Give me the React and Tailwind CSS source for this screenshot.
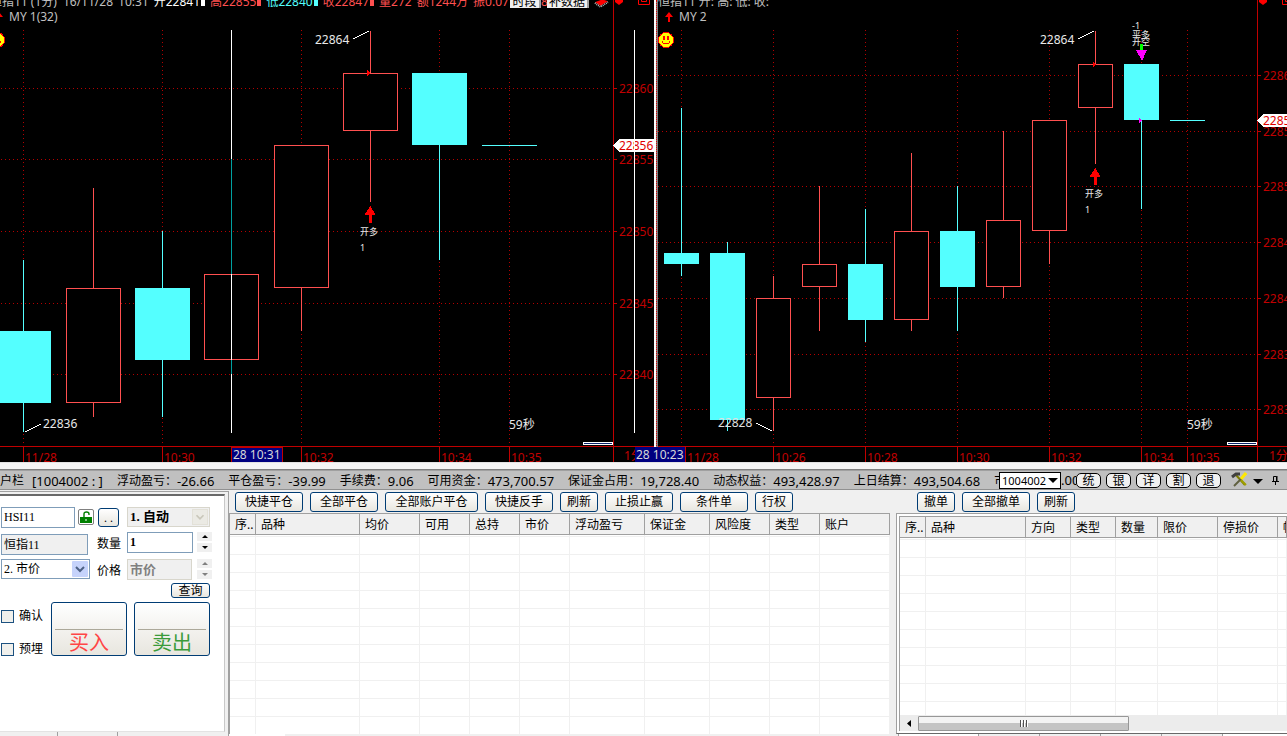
import { useState } from "react";

const RED = "#ff5050";
const CYAN = "#54ffff";
const GRID = "#b40000";
const AXIS = "#c00000";
const FONT = "font-['Noto_Sans','Noto_Sans_CJK_SC',sans-serif]";

// candles: x = centre, t/b = body top and bottom, hi/lo = wick ends
const leftChart = {
  half: 27,
  axisX: 613,
  gridStart: 1,
  gridX: [23, 162, 301, 439, 509],
  levels: [[22860, 88], [22855, 159], [22850, 231], [22845, 303], [22840, 374]],
  times: [[23, "11/28"], [162, "10:30"], [301, "10:32"], [439, "10:34"], [509, "10:35"], [622, "1分"]],
  price: 145,
  candles: [
    { x: 23, t: 331, b: 403, hi: 260, lo: 432 },
    { x: 93, t: 288, b: 402, hi: 188, lo: 417, up: true },
    { x: 162, t: 288, b: 360, hi: 231, lo: 417 },
    { x: 231, t: 274, b: 359, hi: 274, lo: 359, up: true },
    { x: 301, t: 145, b: 287, hi: 145, lo: 331, up: true },
    { x: 370, t: 73, b: 130, hi: 31, lo: 202, up: true },
    { x: 439, t: 73, b: 145, hi: 73, lo: 260 },
    { x: 509, t: 145, b: 146, hi: 145, lo: 146 },
  ],
};

const rightChart = {
  half: 17,
  axisX: 599,
  gridStart: 0,
  gridX: [23, 115, 207, 299, 391, 483, 529],
  levels: [[22860, 75], [22855, 131], [22850, 186], [22845, 242], [22840, 298], [22835, 354], [22830, 409]],
  times: [[27, "11/28"], [115, "10:26"], [207, "10:28"], [299, "10:30"], [391, "10:32"], [483, "10:34"], [529, "10:35"], [609, "1分"]],
  price: 120,
  candles: [
    { x: 23, t: 253, b: 264, hi: 108, lo: 276 },
    { x: 69, t: 253, b: 420, hi: 242, lo: 431 },
    { x: 115, t: 298, b: 397, hi: 276, lo: 431, up: true },
    { x: 161, t: 264, b: 286, hi: 186, lo: 331, up: true },
    { x: 207, t: 264, b: 320, hi: 209, lo: 342 },
    { x: 253, t: 231, b: 319, hi: 153, lo: 331, up: true },
    { x: 299, t: 231, b: 287, hi: 186, lo: 331 },
    { x: 345, t: 220, b: 286, hi: 131, lo: 298, up: true },
    { x: 391, t: 120, b: 230, hi: 120, lo: 264, up: true },
    { x: 437, t: 64, b: 107, hi: 31, lo: 164, up: true },
    { x: 483, t: 64, b: 120, hi: 64, lo: 209 },
    { x: 529, t: 120, b: 121, hi: 120, lo: 121 },
  ],
};

const Candle = ({ c, half }) => (
  <g>
    <rect x={c.x} y={c.hi} width="1" height={c.lo - c.hi} fill={c.up ? RED : CYAN} />
    {c.up ? (
      <rect x={c.x - half + 0.5} y={c.t + 0.5} width={half * 2} height={c.b - c.t} fill="#000" stroke={RED} />
    ) : (
      <rect x={c.x - half} y={c.t} width={half * 2 + 1} height={c.b - c.t} fill={CYAN} />
    )}
  </g>
);

const BuyMark = ({ x, y }) => (
  <g>
    <path d={`M${x + 0.5} ${y}l5 9h-4v8h-3v-8h-4z`} fill="#f00" />
    <text x={x - 10} y={y + 29} fontSize="9" fill="#e8e8e8">开多</text>
    <text x={x - 10} y={y + 45} fontSize="9" fill="#e8e8e8">1</text>
  </g>
);

const Smiley = ({ x, y }) => (
  <g transform={`translate(${x} ${y})`}>
    <path d="M-3-8h4M-4-7h2" stroke="#0f0" />
    <circle r="7.5" fill="#ff0" stroke="#f00" />
    <path d="M-2-4v4M2-4v4" stroke="#f00" strokeWidth="2" />
    <path d="M-4 1q0 3 4 3t4-3" fill="none" stroke="#f00" />
  </g>
);

const Chart = ({ data, children }) => (
  <svg className="col-start-1 row-start-1 h-full w-full" shapeRendering="crispEdges" fontSize="12">
    {data.gridX.map((x) => (
      <line key={x} x1={x + 0.5} x2={x + 0.5} y1="30" y2="446" stroke={GRID} strokeDasharray="1 3" />
    ))}
    {data.levels.map(([v, y]) => (
      <g key={v}>
        <line x1={data.gridStart} x2={data.axisX} y1={y + 0.5} y2={y + 0.5} stroke={GRID} strokeDasharray="1 3" />
        <line x1={data.axisX} x2={data.axisX + 4} y1={y + 0.5} y2={y + 0.5} stroke={AXIS} />
        <text x={data.axisX + 6} y={y + 5} fill={AXIS}>{v}</text>
      </g>
    ))}
    {data.candles.map((c) => <Candle key={c.x} c={c} half={data.half} />)}
    <path d={`M${data.axisX + 0.5} 0v462M0 446.5h2000`} stroke={AXIS} />
    {data.times.map(([x, label]) => (
      <g key={label}>
        {label !== "1分" && <line x1={x + 0.5} x2={x + 0.5} y1="446" y2="462" stroke={AXIS} />}
        <text x={x + 2} y={label === "1分" ? 460 : 462} fill={AXIS}>{label}</text>
      </g>
    ))}
    <path d={`M${data.axisX} ${data.price}l6-6h40v13h-40z`} fill="#fff" />
    <text x={data.axisX + 6} y={data.price + 5} fill="#e00000">22856</text>
    <rect x={data.axisX - 29.5} y="442.5" width="29" height="2" fill="#0a246a" stroke="#fff" />
    {children}
  </svg>
);

const WindowIcons = () => (
  <svg className="h-2 w-10 shrink-0" viewBox="0 0 40 8" fill="none" stroke="#f00">
    <path d="M1 0h8v2L5 5 1 2z" fill="#f00" stroke="none" />
    <path d="M24.500 0v4.500h11V0M27.500 0v1.500h5V0" />
  </svg>
);

const MyLabel = ({ children }) => (
  <div className="-mt-px flex h-4 items-center gap-1 text-[#c0c0c0]">
    <svg className="h-3 w-3" viewBox="0 0 12 12" fill="#f00"><path d="M6 1l4 5H7v5H5V6H2z" /></svg>
    {children}
  </div>
);

const Quote = ({ children, className }) => (
  <span className={`flex items-end gap-px ${className}`}>
    {children}
    <i className="mb-1 block h-[6px] w-1 bg-current" />
  </span>
);

const funds = [
  ["浮动盈亏", "-26.66"],
  ["平仓盈亏", "-39.99"],
  ["手续费", "9.06"],
  ["可用资金", "473,700.57"],
  ["保证金占用", "19,728.40"],
  ["动态权益", "493,428.97"],
  ["上日结算", "493,504.68"],
  ["市值权益", "0.00"],
];

const XpButton = ({ className = "", children, ...rest }) => (
  <button
    className={`rounded-[3px] border border-[#003c74] bg-linear-to-b from-white to-[#e8e6df] text-black ${className}`}
    {...rest}
  >
    {children}
  </button>
);

const Grid = ({ cols, rows }) => (
  <table className="w-full table-fixed border-separate border-spacing-0 text-[12px] leading-4">
    <colgroup>
      {cols.map(([name, w]) => <col key={name} style={w ? { width: w } : undefined} />)}
    </colgroup>
    <thead>
      <tr className="h-[21px] bg-[#f0f0f0]">
        {cols.map(([name]) => (
          <th key={name} className="overflow-hidden border-r border-b border-[#a0a0a0] p-0 pt-px pl-[5px] text-left font-normal whitespace-nowrap">
            {name}
          </th>
        ))}
      </tr>
    </thead>
    <tbody>
      <tr className="h-[2px]">
        {cols.map(([name]) => <td key={name} className="border-r border-b border-[#f0f0f0] p-0" />)}
      </tr>
      {Array.from({ length: rows }, (_, i) => (
        <tr key={i} className="h-[18px]">
          {cols.map(([name]) => <td key={name} className="border-r border-b border-[#f0f0f0] p-0" />)}
        </tr>
      ))}
    </tbody>
  </table>
);

const positionCols = [
  ["序..", 26], ["品种", 104], ["均价", 60], ["可用", 50], ["总持", 50], ["市价", 50],
  ["浮动盈亏", 75], ["保证金", 65], ["风险度", 60], ["类型", 50], ["账户", 0],
];
const orderCols = [
  ["序..", 26], ["品种", 100], ["方向", 45], ["类型", 45], ["数量", 42], ["限价", 60], ["停损价", 60], ["帐户", 0],
];
const tradeButtons = [
  ["快捷平仓", "w-[68px]"], ["全部平仓", "w-[68px]"], ["全部账户平仓", "w-[93px]"], ["快捷反手", "w-[68px]"],
  ["刷新", "w-[38px]"], ["止损止赢", "w-[68px]"], ["条件单", "w-[68px]"], ["行权", "w-[38px]"],
];

const Spinner = ({ disabled }) => (
  <div className={`flex w-[15px] flex-col gap-[2px] ${disabled ? "text-[#808080]" : "text-black"}`}>
    {["M4 3l3-3 3 3z", "M4 0h6L7 3z"].map((d, i) => (
      <button key={d} disabled={disabled} aria-label={i ? "减少" : "增加"} className="flex h-[9px] items-center justify-center bg-[#f0f0f0]">
        <svg className="h-[3px] w-[14px]" viewBox="0 0 14 3" fill="currentColor"><path d={d} /></svg>
      </button>
    ))}
  </div>
);

const Chevron = ({ className }) => (
  <svg className={`pointer-events-none absolute top-[2px] right-[2px] h-4 w-4 ${className}`} viewBox="0 0 16 16" fill="none" stroke="currentColor" strokeWidth="2">
    <path d="M4 6l4 4 4-4" />
  </svg>
);

function OrderForm() {
  const [code, setCode] = useState("HSI11");
  const [qty, setQty] = useState("1");

  return (
    <div className="border-t border-r border-[#a0a0a0] bg-[#f0f0f0] pt-[2px] pr-[3px]">
      <div className="h-[238px] overflow-hidden border-t-2 border-r border-b border-t-[#696969] border-r-[#c8c8c8] border-b-[#e3e3e3] bg-white pt-[11px] pl-px font-['Liberation_Serif','Noto_Sans_CJK_SC',serif] text-[12px]">
        <div className="flex h-[25px] items-start">
          <input aria-label="合约" value={code} onChange={(e) => setCode(e.target.value)} className="h-[21px] w-[74px] border border-[#7f9db9] px-[2px]" />
          <button aria-label="锁定" className="mt-[2px] ml-[3px] flex h-4 w-4 items-center justify-center rounded-[2px] border border-[#808080] bg-white">
            <svg className="h-[14px] w-[14px]" viewBox="0 0 14 14" fill="none" stroke="#008000" strokeWidth="1.4">
              <path d="M5 7V4q0-2 2.500-2t2.500 2v1" />
              <rect x="1" y="7" width="12" height="6" fill="#008000" stroke="none" />
              <path d="M7 9v2" stroke="#fff" strokeWidth="1" />
            </svg>
          </button>
          <XpButton className="mt-px ml-1 h-[19px] w-[21px] leading-3">. .</XpButton>
          <div className="relative ml-2">
            <select aria-label="开平" disabled className="h-5 w-[83px] appearance-none border border-[#d8d6cc] bg-[#f0f0f0] px-[2px] text-[13px] leading-4 font-bold text-black opacity-100">
              <option>1. 自动</option>
            </select>
            <Chevron className="border border-[#e3e1d8] bg-[#ebeae4] text-[#c9c7ba]" />
          </div>
        </div>
        <div className="flex h-[27px] items-start">
          <input aria-label="合约名称" readOnly value="恒指11" className="mt-[2px] h-[21px] w-[87px] border border-[#7f9db9] bg-[#f0f0f0] px-[2px] pb-[2px]" />
          <label htmlFor="qty" className="w-[39px] pt-1 pl-[9px] leading-4">数量</label>
          <input id="qty" value={qty} onChange={(e) => setQty(e.target.value)} className="h-[21px] w-[66px] border border-[#7f9db9] px-[2px] font-bold" />
          <div className="ml-1"><Spinner /></div>
        </div>
        <div className="flex h-[24px] items-start">
          <div className="relative">
            <select aria-label="价格类型" className="h-5 w-[89px] appearance-none border border-[#7f9db9] bg-white px-[2px] leading-4">
              <option>2. 市价</option>
            </select>
            <Chevron className="rounded-[1px] bg-[#c6d3fb] text-[#4d6185]" />
          </div>
          <label htmlFor="price" className="w-[37px] pt-1 pl-[7px] leading-4">价格</label>
          <input id="price" disabled value="市价" className="h-[21px] w-[65px] border border-[#d8d6cc] bg-[#f0f0f0] px-[2px] pb-[3px] text-[13px] font-bold text-[#808080]" />
          <div className="ml-[5px]"><Spinner disabled /></div>
        </div>
        <div className="flex justify-end pr-[14px]">
          <XpButton className="h-[15px] w-[39px] leading-3">查询</XpButton>
        </div>
        <div className="flex gap-[7px] pt-1">
          <div className="flex w-[43px] flex-col gap-[17px] pt-[6px]">
            {["确认", "预埋"].map((t) => (
              <label key={t} className="flex items-center gap-[5px] leading-4 whitespace-nowrap">
                <input type="checkbox" className="h-[13px] w-[13px] shrink-0 appearance-none border border-[#1c5180] bg-[#f0f0ec]" />
                {t}
              </label>
            ))}
          </div>
          <XpButton className="flex h-[54px] w-[76px] items-end px-[3px] text-[20px] leading-[24px]">
            <span className="w-full border-t border-[#aca899] pt-px text-[#ff4646]">买入</span>
          </XpButton>
          <XpButton className="flex h-[54px] w-[76px] items-end px-[3px] text-[20px] leading-[24px]">
            <span className="w-full border-t border-[#aca899] pt-px text-[#3a9b3a]">卖出</span>
          </XpButton>
        </div>
      </div>
      <div className="ml-[57px] h-1 w-[61px] border-x border-[#a0a0a0]" />
    </div>
  );
}

export default function App() {
  return (
    <div className={`min-h-screen overflow-hidden bg-[#f0f0f0] text-[12px] text-black ${FONT}`}>
      <div className="flex h-[462px] bg-black">
        <section className="grid min-w-0 flex-[654] grid-cols-1 overflow-hidden">
          <Chart data={leftChart}>
            <path d="M231.500 30v129M231.500 274v86M231.500 374v59M634.500 30v403" stroke="#fff" />
            <path d="M231.500 159v115M231.500 360v14" stroke="#00a0a0" />
            <path d="M353 39l16-8M25 432l16-8" stroke="#fff" />
            <path d="M367 70l4 3-4 3z" fill="#f00" />
            <text x="315" y="44" fill="#e8e8e8">22864</text>
            <text x="43" y="428" fill="#e8e8e8">22836</text>
            <text x="509" y="429" fill="#e8e8e8">59秒</text>
            <BuyMark x={370} y={206} />
            <Smiley x={-3} y={40} />
            <rect x="231.500" y="447" width="51" height="15" fill="#000080" stroke={AXIS} />
            <text x="233" y="459" fill="#d8d8d8">28 10:31</text>
          </Chart>
          <header className="z-10 col-start-1 row-start-1 overflow-hidden">
            <div className="-ml-[10px] flex h-[10px] items-end gap-[5px] leading-4 whitespace-nowrap text-[#c0c0c0]">
              <span>恒指11 (1分)</span>
              <span className="pl-px">16/11/28</span>
              <span>10:31</span>
              <Quote className="text-white">开22841</Quote>
              <Quote className="text-[#ff5050]">高22855</Quote>
              <Quote className="text-[#54ffff]">低22840</Quote>
              <Quote className="text-[#ff5050]">收22847</Quote>
              <span className="text-[#ff5050]">量272</span>
              <span className="text-[#ff5050]">额1244万</span>
              <span className="w-8 text-[#ff5050]">振0.07</span>
              <div className="flex items-end">
                <button className="mb-[2px] w-[31px] border-r-2 border-[#a0a0a0] bg-[#f0f0f0] leading-[13px] text-black">时段</button>
                <span className="w-[6px] overflow-hidden text-[#ff5050]">8</span>
                <button className="mb-[2px] w-[42px] border-r-2 border-[#a0a0a0] bg-[#f0f0f0] leading-[13px] text-black">补数据</button>
              </div>
              <svg className="mb-[2px] h-2 w-4" viewBox="0 0 16 8"><path d="M1 2l8-3 6 2-8 5z" fill="#f00" /><path d="M1 3l6 4 8-5" fill="none" stroke="#c0c0c0" strokeDasharray="1 1" strokeWidth="2" /></svg>
              <div className="flex h-[10px] items-start"><WindowIcons /></div>
            </div>
            <div className="-ml-[7px]"><MyLabel>MY 1(32)</MyLabel></div>
          </header>
        </section>
        <div className="flex w-1 shrink-0 border-l-2 border-white bg-[#808080]">
          <i className="h-full border-l border-dotted border-[#e00000]" />
        </div>
        <section className="relative grid min-w-0 flex-[629] grid-cols-1">
          <div className="col-start-1 row-start-1 grid overflow-hidden">
            <Chart data={rightChart}>
              <path d="M420 39l16-8M98 423l16 8" stroke="#fff" />
              <path d="M435 62l3 2-3 3z" fill="#f00" />
              <path d="M481 118l3 2-3 3z" fill="#f0f" />
              <text x="382" y="44" fill="#e8e8e8">22864</text>
              <text x="60" y="427" fill="#e0e0e0">22828</text>
              <text x="529" y="429" fill="#e8e8e8">59秒</text>
              <BuyMark x={437} y={168} />
              <g fontSize="9" fill="#e8e8e8">
                <text x="474" y="29">-1</text>
                <text x="474" y="38">平多</text>
                <text x="474" y="45">开空</text>
              </g>
              <rect x="482" y="44" width="3" height="6" fill="#0f0" />
              <path d="M478 50h11l-5 11z" fill="#f0f" />
              <Smiley x={8} y={40} />
            </Chart>
          </div>
          <header className="z-10 col-start-1 row-start-1 overflow-hidden">
            <div className="flex h-[10px] items-end justify-between leading-4 whitespace-nowrap text-[#c0c0c0]">
              <span>恒指11 开: 高: 低: 收:</span>
              <span className="-mr-[11px] flex h-[10px] items-start"><WindowIcons /></span>
            </div>
            <div className="pl-[5px]"><MyLabel>MY 2</MyLabel></div>
          </header>
          <span className="absolute bottom-0 -left-[23px] z-20 h-[15px] border-r border-[#c00000] bg-[#000080] px-px leading-[15px] whitespace-nowrap text-[#d8d8d8]">28 10:23</span>
        </section>
      </div>

      <div className="h-2 border-t border-b border-t-[#e3e3e3] border-b-[#808080] bg-[#f6f6f6]" />
      <div className="flex h-5 items-center border-t border-b border-t-[#a0a0a0] border-b-[#909090] bg-[#c0c0c0]">
        <div className="flex min-w-0 flex-1 gap-[14px] overflow-hidden pt-px leading-[18px] whitespace-nowrap">
          <span className="flex gap-2">户栏 <span className="text-[13px]">[1004002 : ]</span></span>
          {funds.map(([k, v]) => (
            <span key={k} className="flex">
              <span>{k}：</span>
              <span className="text-[13px]">{v}</span>
            </span>
          ))}
        </div>
        <div className="flex shrink-0 items-center">
          <div className="relative">
            <select aria-label="账户" className="block h-[17px] w-[62px] appearance-none border border-black bg-white px-[2px] text-[11px] leading-[15px]">
              <option>1004002</option>
            </select>
            <svg className="pointer-events-none absolute top-[6px] right-[3px] h-[6px] w-[10px]" viewBox="0 0 10 6"><path d="M0 0h10L5 5z" /></svg>
          </div>
          <span className="w-[15px] overflow-hidden text-[13px] leading-[18px]">.00</span>
          <div className="flex gap-[5px]">
            {["统", "银", "详", "割", "退"].map((t) => (
              <button key={t} className="h-[15px] w-[25px] rounded-[5px] border border-black bg-[#f0f0f0] leading-[13px]">{t}</button>
            ))}
          </div>
          <svg className="ml-[10px] h-4 w-4" viewBox="0 0 16 16" fill="none" strokeWidth="3">
            <path d="M5 3l9 10" stroke="#808000" strokeWidth="2" />
            <path d="M1 5l4-3h4" stroke="#404040" />
            <path d="M11 6l-8 8" stroke="#606040" strokeWidth="2" />
            <path d="M10 7l5-6" stroke="#ffe800" />
            <path d="M10 8l5 5" stroke="#a0a000" strokeWidth="2" />
          </svg>
          <svg className="mt-[2px] ml-[6px] h-[5px] w-[10px]" viewBox="0 0 10 5"><path d="M0 0h10L5 5z" /></svg>
          <svg className="mr-2 ml-[9px] h-[10px] w-[7px]" viewBox="0 0 7 10" fill="none" stroke="#000"><path d="M1.500 6V1.500h3V6M5 1v5M0 6.500h7M3.500 6v4" /></svg>
        </div>
      </div>

      <main className="grid h-[246px] grid-cols-[229px_minmax(0,667fr)_minmax(0,391fr)] pt-px">
        <OrderForm />
        <section className="flex min-w-0 flex-col pr-[6px]">
          <div className="flex h-[22px] items-start gap-[7px] pt-px pl-[6px]">
            {tradeButtons.map(([t, w]) => (
              <XpButton key={t} className={`h-5 shrink-0 leading-4 whitespace-nowrap ${w}`}>{t}</XpButton>
            ))}
          </div>
          <div className="h-[221px] overflow-hidden border-t border-l border-[#a0a0a0] bg-white">
            <Grid cols={positionCols} rows={11} />
          </div>
          <div className="h-[2px] w-14 bg-white" />
        </section>
        <section className="flex min-w-0 flex-col">
          <div className="flex h-[22px] items-start gap-[7px] pt-px pl-[21px]">
            <XpButton className="h-5 w-[38px] leading-4">撤单</XpButton>
            <XpButton className="h-5 w-[68px] leading-4">全部撤单</XpButton>
            <XpButton className="h-5 w-[38px] leading-4">刷新</XpButton>
          </div>
          <div className="flex h-[221px] flex-col border-t border-b border-l border-t-[#a0a0a0] border-b-[#696969] border-l-[#a0a0a0] bg-white pt-[2px] pl-[2px]">
            <div className="min-h-0 flex-1 overflow-hidden border-t border-l border-[#a0a0a0]">
              <Grid cols={orderCols} rows={10} />
            </div>
            <div className="mb-[2px] flex h-4 items-center border-l border-[#a0a0a0] bg-[#ececec]">
              <button aria-label="向左" className="flex h-4 w-[18px] items-center justify-center">
                <svg className="h-[7px] w-1" viewBox="0 0 4 7"><path d="M4 0v7L0 3.500z" /></svg>
              </button>
              <button aria-label="滚动" className="flex h-[15px] w-[211px] items-center justify-center gap-px rounded-[1px] border border-[#979797] bg-linear-to-b from-[#f3f3f3] from-50% to-[#c4c4c4] to-50%">
                {[0, 1, 2].map((i) => <i key={i} className="h-[7px] w-[2px] border-l border-[#505050] bg-white" />)}
              </button>
            </div>
          </div>
          <div className="flex h-[2px] pl-[2px]">
            <i className="w-[81px] border-x border-[#a0a0a0] bg-white" />
            {[0, 1, 2, 3].map((i) => <i key={i} className="w-[61px] border-r border-[#a0a0a0]" />)}
            <i className="flex-1 bg-white" />
          </div>
        </section>
      </main>
    </div>
  );
}
